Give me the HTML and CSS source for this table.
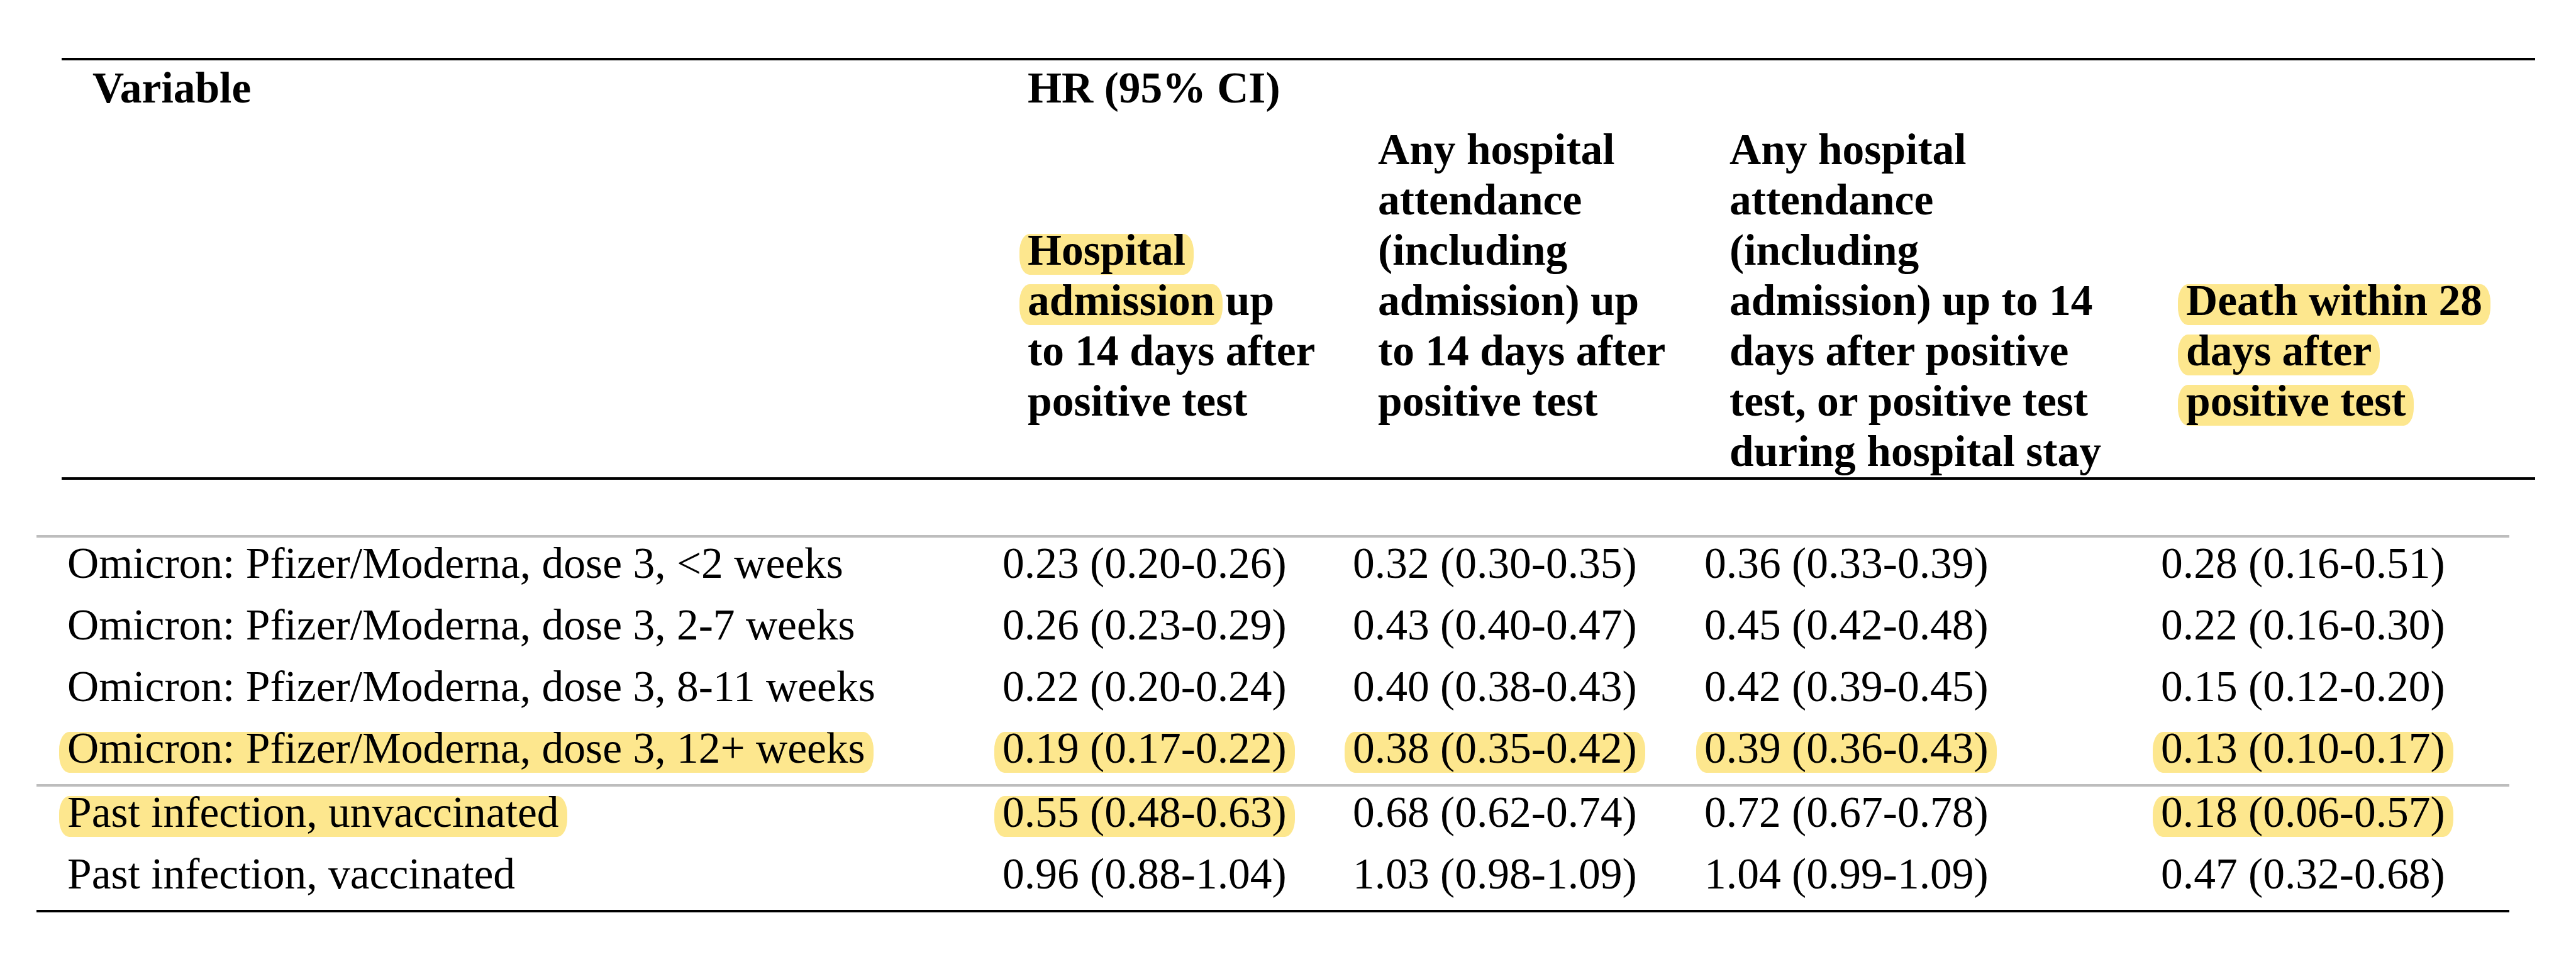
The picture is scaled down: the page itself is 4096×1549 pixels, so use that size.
FILE: index.html
```html
<!DOCTYPE html>
<html lang="en">
<head>
<meta charset="utf-8">
<title>HR table</title>
<link rel="stylesheet" href="styles.css">
</head>
<body>
<div class="page">
  <div class="thead">
    <div class="hrow top">
      <div class="cell">Variable</div>
      <div class="cell span">HR (95% CI)</div>
    </div>
    <div class="hrow sub">
      <div class="cell"></div>
      <div class="cell skip2"><span class="hl">Hospital</span><br><span class="hl">admission</span> up<br>to 14 days after<br>positive test</div>
      <div class="cell">Any hospital<br>attendance<br>(including<br>admission) up<br>to 14 days after<br>positive test</div>
      <div class="cell">Any hospital<br>attendance<br>(including<br>admission) up to 14<br>days after positive<br>test, or positive test<br>during hospital stay</div>
      <div class="cell skip3"><span class="hl">Death within 28</span><br><span class="hl">days after</span><br><span class="hl">positive test</span></div>
    </div>
  </div>

  <div class="tbody">
    <div class="row">
      <div class="cell">Omicron: Pfizer/Moderna, dose 3, &lt;2 weeks</div>
      <div class="cell">0.23 (0.20-0.26)</div>
      <div class="cell">0.32 (0.30-0.35)</div>
      <div class="cell">0.36 (0.33-0.39)</div>
      <div class="cell">0.28 (0.16-0.51)</div>
    </div>
    <div class="row">
      <div class="cell">Omicron: Pfizer/Moderna, dose 3, 2-7 weeks</div>
      <div class="cell">0.26 (0.23-0.29)</div>
      <div class="cell">0.43 (0.40-0.47)</div>
      <div class="cell">0.45 (0.42-0.48)</div>
      <div class="cell">0.22 (0.16-0.30)</div>
    </div>
    <div class="row">
      <div class="cell">Omicron: Pfizer/Moderna, dose 3, 8-11 weeks</div>
      <div class="cell">0.22 (0.20-0.24)</div>
      <div class="cell">0.40 (0.38-0.43)</div>
      <div class="cell">0.42 (0.39-0.45)</div>
      <div class="cell">0.15 (0.12-0.20)</div>
    </div>
    <div class="row">
      <div class="cell"><span class="hl">Omicron: Pfizer/Moderna, dose 3, 12+ weeks</span></div>
      <div class="cell"><span class="hl">0.19 (0.17-0.22)</span></div>
      <div class="cell"><span class="hl">0.38 (0.35-0.42)</span></div>
      <div class="cell"><span class="hl">0.39 (0.36-0.43)</span></div>
      <div class="cell"><span class="hl">0.13 (0.10-0.17)</span></div>
    </div>
    <div class="row sep">
      <div class="cell"><span class="hl">Past infection, unvaccinated</span></div>
      <div class="cell"><span class="hl">0.55 (0.48-0.63)</span></div>
      <div class="cell">0.68 (0.62-0.74)</div>
      <div class="cell">0.72 (0.67-0.78)</div>
      <div class="cell"><span class="hl">0.18 (0.06-0.57)</span></div>
    </div>
    <div class="row">
      <div class="cell">Past infection, vaccinated</div>
      <div class="cell">0.96 (0.88-1.04)</div>
      <div class="cell">1.03 (0.98-1.09)</div>
      <div class="cell">1.04 (0.99-1.09)</div>
      <div class="cell">0.47 (0.32-0.68)</div>
    </div>
  </div>
</div>
</body>
</html>
```

FILE: styles.css
```css
html, body {
  margin: 0;
  padding: 0;
  background: #ffffff;
}

.page {
  padding-top: 92px;
  font-family: "Liberation Serif", "Times New Roman", serif;
  font-size: 69.5px;
  color: #000;
}

/* header table */
.thead {
  margin-left: 98px;
  width: 3933px;
  border-top: 4px solid #000;
  border-bottom: 4px solid #000;
  padding-bottom: 1px;
  font-weight: bold;
  line-height: 80px;
}

.hrow {
  display: grid;
  grid-template-columns: 1487px 557px 559px 726px 604px;
}

.hrow.top {
  padding-top: 4px;
}

.hrow.top .span {
  grid-column: 2 / 6;
}

.hrow.sub {
  margin-top: 18px;
  align-items: start;
}

.cell {
  padding-left: 49px;
  white-space: nowrap;
}

.skip2 {
  padding-top: 160px;
}

.skip3 {
  padding-top: 240px;
}

/* body table */
.tbody {
  margin-left: 58px;
  width: 3932px;
  margin-top: 88px;
  border-top: 4px solid #bdbdbd;
  border-bottom: 4px solid #000;
  line-height: 76px;
}

.row {
  display: grid;
  grid-template-columns: 1487px 557px 559px 726px 603px;
  height: 98px;
  box-sizing: border-box;
  padding-top: 3px;
}

.row.sep {
  border-top: 4px solid #bdbdbd;
  height: 102px;
}

/* yellow marker highlight */
.hl {
  display: inline-block;
  background: #fde78e;
  line-height: 51px;
  padding: 0 13px 14px;
  margin: 0 -13px;
  border-radius: 16px / 28px;
}
```
